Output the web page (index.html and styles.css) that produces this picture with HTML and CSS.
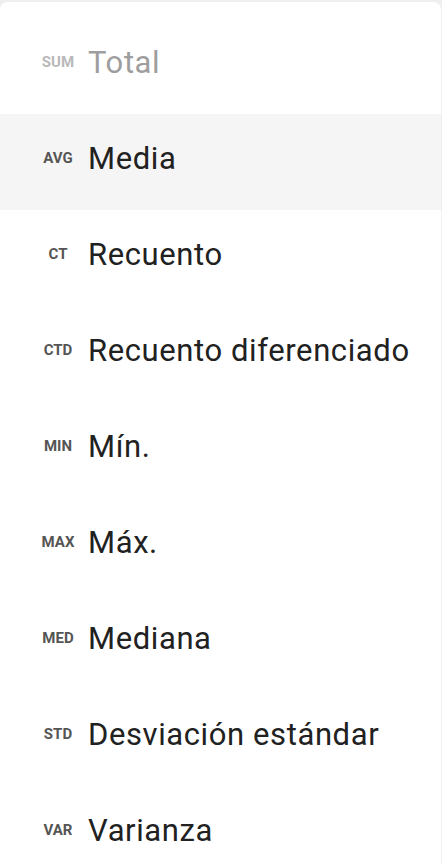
FILE: index.html
```html
<!DOCTYPE html>
<html lang="es">
<head>
<meta charset="utf-8">
<link rel="stylesheet" href="styles.css">
</head>
<body>
<div class="sheet">
  <ul class="menu">
    <li class="item disabled"><span class="code">SUM</span><span class="label">Total</span></li>
    <li class="item active"><span class="code">AVG</span><span class="label">Media</span></li>
    <li class="item"><span class="code">CT</span><span class="label">Recuento</span></li>
    <li class="item"><span class="code">CTD</span><span class="label">Recuento diferenciado</span></li>
    <li class="item"><span class="code">MIN</span><span class="label">Mín.</span></li>
    <li class="item"><span class="code">MAX</span><span class="label">Máx.</span></li>
    <li class="item"><span class="code">MED</span><span class="label">Mediana</span></li>
    <li class="item"><span class="code">STD</span><span class="label">Desviación estándar</span></li>
    <li class="item"><span class="code">VAR</span><span class="label">Varianza</span></li>
  </ul>
</div>
</body>
</html>
```
FILE: styles.css
```css
html, body {
  margin: 0;
  padding: 0;
  background: #efefef;
  height: 100%;
  overflow: hidden;
}
body {
  font-family: Roboto, "Noto Sans", sans-serif;
  padding-top: 2px;
}
.sheet {
  background: #ffffff;
  border-radius: 8px 8px 0 0;
  width: 441px;
  min-height: 900px;
  padding-top: 16px;
}
.menu {
  list-style: none;
  margin: 0;
  padding: 0;
}
.item {
  box-sizing: border-box;
  height: 96px;
  padding-bottom: 8px;
  display: flex;
  align-items: center;
  color: #212121;
}
.item.active {
  background: #f5f5f5;
}
.code {
  width: 40px;
  margin-left: 38px;
  margin-right: 10px;
  text-align: center;
  font-size: 15px;
  font-weight: 700;
  color: #555555;
}
.label {
  font-size: 31px;
  font-weight: 400;
  letter-spacing: 0.6px;
}
.disabled .code {
  color: #b9b9b9;
}
.disabled .label {
  color: #9e9e9e;
}
```
